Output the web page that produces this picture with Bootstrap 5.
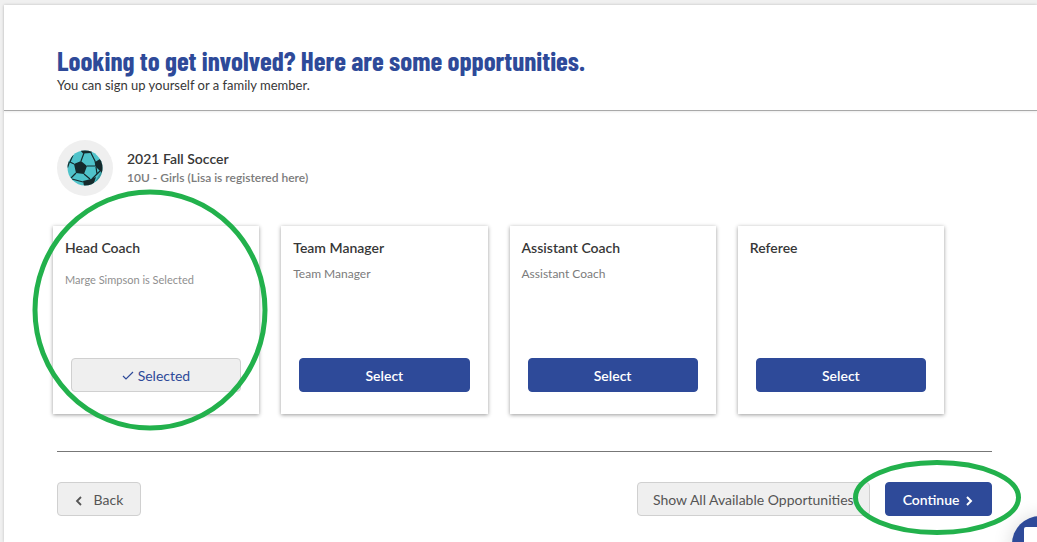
<!DOCTYPE html>
<html lang="en">
<head>
<meta charset="utf-8">
<meta name="viewport" content="width=device-width, initial-scale=1">
<title>Volunteer opportunities</title>
<link rel="stylesheet" href="https://cdn.jsdelivr.net/npm/bootstrap@5.3.0/dist/css/bootstrap.min.css">
<style>
  :root { --brand: #2e4a99; --ink: #373737; --muted-ink: #7b7b7b; --soft: #efefef; --pen: #22b14c; }
  body { font-family: Lato, "Liberation Sans", sans-serif; font-size: 14px; line-height: 20px; color: var(--ink); background: #f0f0f0; overflow: hidden; }
  .sheet { margin: 5px 0 0 4px; min-height: calc(100vh - 5px); box-shadow: 0 0 3px rgba(0,0,0,.2); }
  .sheet-head { padding: 40px 45px 15px 53px; border-bottom: 1px solid #a9a9a9; box-shadow: 0 1px 2px rgba(0,0,0,.08); }
  .sheet-head h1 { font-family: "Barlow Condensed", "Roboto Condensed", "Open Sans Condensed", "Liberation Sans Narrow", sans-serif; font-size: 27px; line-height: 30px; font-weight: 700; color: var(--brand); }
  .sheet-head p { font-size: 13px; }
  .sheet-body { padding: 29px 45px 0 53px; }
  .program { gap: 14px; }
  .sport { width: 56px; height: 56px; background: var(--soft); }
  .program h2 { font-size: 14px; line-height: 20px; font-weight: 600; }
  .program p { font-size: 12px; line-height: 18px; font-weight: 600; color: var(--muted-ink); }
  .roles { --bs-gutter-x: 22px; margin: 30px 37px 0 -15px; }
  .role { min-height: 188px; padding: 12px 12px 22px; background: #fff; box-shadow: 0 1px 4px rgba(0,0,0,.4); }
  .role h3 { font-size: 14px; line-height: 20px; font-weight: 600; margin-bottom: 7px; }
  .role p { font-size: 12px; line-height: 18px; color: var(--muted-ink); }
  .role .chosen { font-size: 11px; line-height: 30px; color: #8f8f8f; }
  .role .btn { margin: 0 6px; }
  .btn { height: 34px; padding: 0 15px; font-size: 14px; line-height: 34px; border-radius: 4px; }
  .btn-step { padding: 0 17px; }
  .btn-brand, .btn-brand:hover { background: var(--brand); border-color: var(--brand); color: #fff; font-weight: 600; }
  .btn-soft, .btn-soft:hover { background: var(--soft); border-color: #d0d0d0; color: #555; }
  .role .btn-soft { color: var(--brand); }
  .foot { gap: 15px; margin-top: 37px; padding-top: 30px; border-top: 1px solid #777; }
  .ring { position: absolute; fill: none; stroke: var(--pen); stroke-width: 5; pointer-events: none; z-index: 2; }
  .ring-role { left: -21px; top: -37px; width: 236px; height: 242px; }
  .ring-next { left: -32px; top: -22px; width: 168px; height: 75px; }
  .chat { position: fixed; right: -31px; bottom: -30px; width: 56px; height: 56px; padding: 0; border: 0; border-radius: 50%; background: var(--brand); box-shadow: 0 1px 20px rgba(0,0,0,.16); }
</style>
</head>
<body>
<main class="sheet bg-white">
  <header class="sheet-head">
    <h1 class="m-0">Looking to get involved? Here are some opportunities.</h1>
    <p class="m-0">You can sign up yourself or a family member.</p>
  </header>
  <div class="sheet-body">
    <section class="program d-flex align-items-center">
      <div class="sport rounded-circle d-flex align-items-center justify-content-center flex-shrink-0">
        <svg width="36" height="36" viewBox="0 0 36 36" aria-hidden="true">
          <clipPath id="ball"><circle cx="18" cy="18" r="17.5"/></clipPath>
          <g clip-path="url(#ball)">
            <path fill="#4fc3ca" d="M0 0h36v36H0z"/>
            <path fill="#35979b" d="M36 18l-8 14 1 4h7z"/>
            <path fill="#152a2c" d="M7 14l7-3 6 5-3 8-8-1zM13 0h14l-3 3-8 .5zM28 12l5-3 3 3v12l-3-3-4-4zM16 31l8-2 5-2-3 9H17zM0 11l3 1-2 6-2-2z"/>
            <path fill="none" stroke="#152a2c" stroke-width="1.2" d="M14 11l3-8M7 14l-4-2 3-7M20 16h9l-1-5-4-8M17 24l6 5M9 23l-5 5M29 17l1 7-5 5M5 29l11 3M30 24l3-3"/>
          </g>
        </svg>
      </div>
      <div>
        <h2 class="m-0">2021 Fall Soccer</h2>
        <p class="m-0">10U - Girls (Lisa is registered here)</p>
      </div>
    </section>

    <section class="roles row row-cols-4">
      <div class="col">
        <article class="role h-100 d-flex flex-column position-relative">
          <h3>Head Coach</h3>
          <p class="chosen m-0">Marge Simpson is Selected</p>
          <button type="button" class="btn btn-soft mt-auto"><svg width="12" height="12" viewBox="0 0 12 12" fill="none" stroke="currentColor" stroke-width="1.2" aria-hidden="true"><path d="M1 5l3 3 7-7"/></svg> Selected</button>
          <svg class="ring ring-role" viewBox="0 0 236 242" aria-hidden="true"><ellipse cx="118" cy="121" rx="115" ry="118"/></svg>
        </article>
      </div>
      <div class="col">
        <article class="role h-100 d-flex flex-column">
          <h3>Team Manager</h3>
          <p class="m-0">Team Manager</p>
          <button type="button" class="btn btn-brand mt-auto">Select</button>
        </article>
      </div>
      <div class="col">
        <article class="role h-100 d-flex flex-column">
          <h3>Assistant Coach</h3>
          <p class="m-0">Assistant Coach</p>
          <button type="button" class="btn btn-brand mt-auto">Select</button>
        </article>
      </div>
      <div class="col">
        <article class="role h-100 d-flex flex-column">
          <h3>Referee</h3>
          <button type="button" class="btn btn-brand mt-auto">Select</button>
        </article>
      </div>
    </section>

    <footer class="foot d-flex">
      <button type="button" class="btn btn-soft btn-step"><svg class="me-1" width="11" height="11" viewBox="0 0 11 11" fill="none" stroke="currentColor" stroke-width="1.8" aria-hidden="true"><path d="M6 1L2 5l4 4"/></svg> Back</button>
      <button type="button" class="btn btn-soft ms-auto">Show All Available Opportunities</button>
      <div class="position-relative">
        <button type="button" class="btn btn-brand btn-step">Continue <svg width="11" height="11" viewBox="0 0 11 11" fill="none" stroke="currentColor" stroke-width="2" aria-hidden="true"><path d="M4 1l4 4-4 4"/></svg></button>
        <svg class="ring ring-next" viewBox="0 0 168 75" aria-hidden="true"><ellipse cx="84" cy="37.5" rx="81.5" ry="35"/></svg>
      </div>
    </footer>
  </div>
</main>
<button type="button" class="chat" aria-label="Open chat"><svg class="d-block" width="56" height="56" viewBox="0 0 56 56" aria-hidden="true"><path fill="#fff" d="M14 11h28a2 2 0 0 1 2 2v28H12V13a2 2 0 0 1 2-2z"/></svg></button>
<script src="https://cdn.jsdelivr.net/npm/bootstrap@5.3.0/dist/js/bootstrap.bundle.min.js"></script>
</body>
</html>
